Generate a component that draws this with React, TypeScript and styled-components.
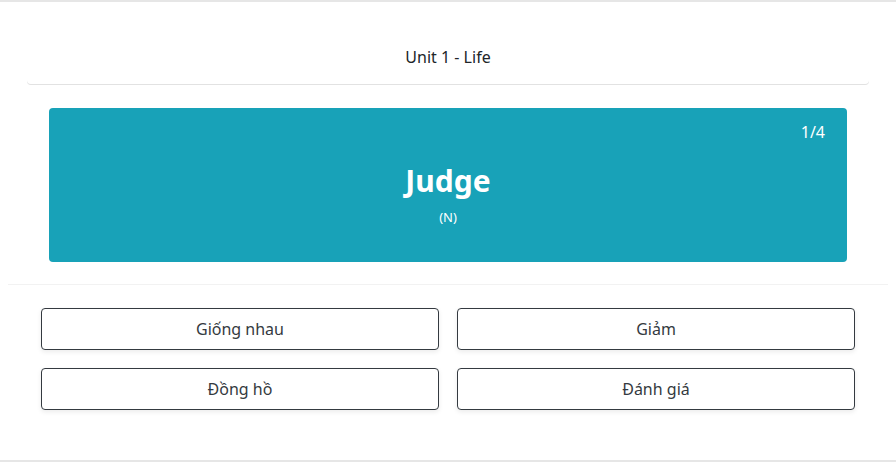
import React from "react";
import styled, { createGlobalStyle } from "styled-components";

const Global = createGlobalStyle`
  html, body { margin: 0; padding: 0; background: #fff; }
  body { font-family: "Segoe UI", "Noto Sans", "Open Sans", sans-serif; color: #212529; }
`;

const Frame = styled.div`
  height: 462px;
  box-sizing: border-box;
  border-top: 2px solid #e6e6e6;
  border-bottom: 2px solid #e6e6e6;
  display: flex;
  flex-direction: column;
`;

const Header = styled.div`
  margin: 0 27px;
  height: 82px;
  display: flex;
  align-items: center;
  justify-content: center;
  padding-top: 28px;
  box-sizing: border-box;
  border-radius: 0 0 4px 4px;
  box-shadow: 0 1px 0 #e2e2e2;
  font-size: 16px;
  color: #212529;
`;

const Body = styled.div`
  padding: 24px 49px 22px;
`;

const Card = styled.div`
  position: relative;
  height: 154px;
  background: #18a2b8;
  border-radius: 4px;
  color: #fff;
  display: flex;
  flex-direction: column;
  align-items: center;
  justify-content: center;
  padding-top: 18px;
  box-sizing: border-box;
`;

const Counter = styled.span`
  position: absolute;
  top: 13px;
  right: 22px;
  font-size: 16px;
`;

const Word = styled.div`
  font-size: 30px;
  font-weight: 700;
  line-height: 36px;
`;

const Kind = styled.div`
  font-size: 13px;
  margin-top: 9px;
`;

const Options = styled.div`
  margin: 0 8px;
  border-top: 1px solid #f2f2f2;
  padding: 23px 33px;
  display: grid;
  grid-template-columns: 1fr 1fr;
  gap: 18px;
`;

const Option = styled.button`
  height: 42px;
  border: 1px solid #343a40;
  border-radius: 4px;
  background: #fff;
  box-shadow: 0 2px 5px rgba(0, 0, 0, 0.08);
  font-family: inherit;
  font-size: 16px;
  color: #343a40;
  cursor: pointer;
`;

const options = ["Giống nhau", "Giảm", "Đồng hồ", "Đánh giá"];

export default function App() {
  return (
    <>
      <Global />
      <Frame>
        <Header>Unit 1 - Life</Header>
        <Body>
          <Card>
            <Counter>1/4</Counter>
            <Word>Judge</Word>
            <Kind>(N)</Kind>
          </Card>
        </Body>
        <Options>
          {options.map((o) => (
            <Option key={o}>{o}</Option>
          ))}
        </Options>
      </Frame>
    </>
  );
}
